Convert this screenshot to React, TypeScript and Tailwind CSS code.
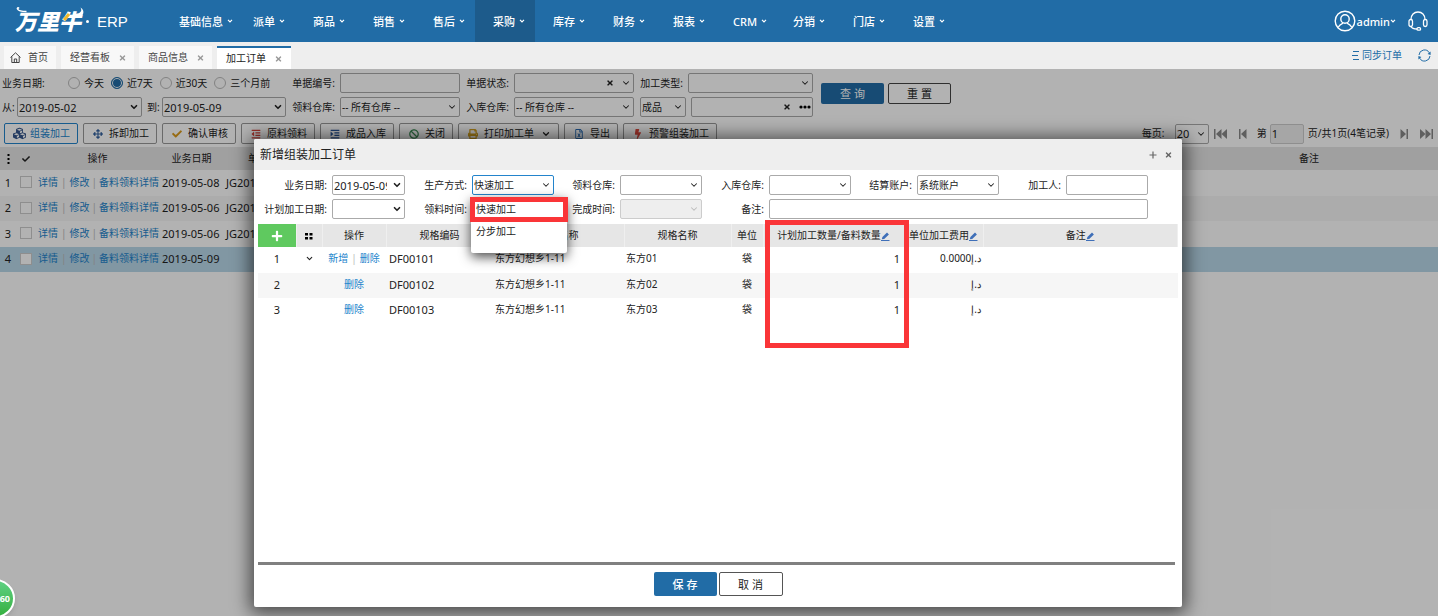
import type { ReactNode } from "react";
import { ChevronDown } from "lucide-react";
import {
  FaArrowsAlt,
  FaBan,
  FaBolt,
  FaCheck,
  FaCubes,
  FaIndent,
  FaOutdent,
  FaPlus,
  FaPrint,
  FaRegFileExcel,
  FaTimes,
} from "react-icons/fa";

const menus = ["派单", "商品", "销售", "售后", "采购", "库存", "财务", "报表", "CRM", "分销", "门店", "设置"];

const orders = [
  { id: 1, date: "2019-05-08", code: "JG201" },
  { id: 2, date: "2019-05-06", code: "JG201" },
  { id: 3, date: "2019-05-06", code: "JG201" },
  { id: 4, date: "2019-05-09", code: "" },
];

const items = [
  { id: 1, code: "DF00101", spec: "东方01", fee: "0.0000د.إ" },
  { id: 2, code: "DF00102", spec: "东方02", fee: "د.إ" },
  { id: 3, code: "DF00103", spec: "东方03", fee: "د.إ" },
];

const Logo = () => (
  <div className="relative flex items-center w-[145px] ml-[15px] h-full text-white">
    <span className="w-[69px] text-[22px] font-black italic leading-none whitespace-nowrap">万里牛</span>
    <svg className="absolute left-0 top-1 w-[72px] h-[34px]" viewBox="0 0 72 34" fill="none">
      <path d="M4 4.500c-1-1.500-2-.5-1.500.5 1 2 4 2.500 9 2.500" stroke="#fff" strokeWidth="1.500" />
      <path d="M54 10l-5 6" stroke="#f0b72c" strokeWidth="3" />
      <path d="M58 10c6 0 10-2 7.500-6.500 5 3 3.500 9.500-3.500 10.500z" fill="#fff" />
    </svg>
    <span className="ml-[2px] w-[3px] h-[3px] rounded-full bg-white" />
    <span className="ml-[8px] font-['Liberation_Sans',sans-serif] font-normal text-[15px]">ERP</span>
  </div>
);

const Caret = () => (
  <svg className="w-[6px] h-[4px]" viewBox="0 0 6 4" fill="none" stroke="currentColor" strokeWidth="1.2">
    <path d="M1 .8l2 2 2-2" />
  </svg>
);

const Header = () => (
  <header className="flex items-center h-[42px] bg-[#216ca6] text-white text-[11px] font-medium">
    <Logo />
    <nav className="flex h-full">
      <button className="flex items-center gap-1 w-[75px] pl-[19px]">
        基础信息
        <Caret />
      </button>
      {menus.map((m) => (
        <button
          key={m}
          className={`flex items-center gap-1 w-[60px] pl-[18px] ${m === "采购" ? "bg-[#1d5b8b]" : ""}`}
        >
          {m}
          <Caret />
        </button>
      ))}
    </nav>
    <button className="flex items-center ml-auto">
      <svg className="w-[22px] h-[22px] mr-px" viewBox="0 0 22 22" fill="none" stroke="currentColor" strokeWidth="1.4">
        <circle cx="11" cy="11" r="9.8" />
        <circle cx="11" cy="9" r="4.2" />
        <path d="M4 17.5c1.400-2.500 3-3.500 5-4.400M18 17.500c-1.400-2.500-3-3.500-5-4.400" />
      </svg>
      admin
      <Caret />
    </button>
    <button aria-label="客服" className="ml-[12px] mr-[10px]">
      <svg className="w-[20px] h-[20px]" viewBox="0 0 20 20" fill="none" stroke="currentColor" strokeWidth="1.3">
        <path d="M3 8.500C3 4 6 1 10 1s7 3 7 7.500" />
        <rect x="1" y="8.500" width="3.500" height="7" rx="1.700" />
        <rect x="15.500" y="8.500" width="3.500" height="7" rx="1.700" />
        <path d="M3 15.500c1 2 3 2.500 6 2.500" />
        <rect x="9" y="16.700" width="3.600" height="2.400" rx="1.200" />
      </svg>
    </button>
  </header>
);

const Tab = ({ label }: { label: string }) => (
  <button className="flex items-center gap-[9px] h-[23px] pl-[9px] w-[73px] bg-[#f8f8f8] text-[#444]">
    {label}
    <FaTimes className="w-[7px] h-[8px] text-[#999]" />
  </button>
);

const TabBar = () => (
  <div className="flex items-end h-[27px] pl-1 gap-[5px] bg-[#eee] text-[10px]">
    <button className="flex items-center h-[23px] pl-[6px] w-[52px] gap-[7px] bg-[#f8f8f8] text-[#444]">
      <svg className="w-[11px] h-[11px]" viewBox="0 0 11 11" fill="none" stroke="currentColor">
        <path d="M.5 5.500L5.500.8l5 4.700M1.800 4.500v6h7.400v-6M4.300 10.500V7h2.400v3.500" />
      </svg>
      首页
    </button>
    <Tab label="经营看板" />
    <Tab label="商品信息" />
    <button className="flex items-center gap-[9px] h-[23px] pl-[9px] w-[74px] bg-white border-t-2 border-[#216ca6] text-[#222]">
      加工订单
      <FaTimes className="w-[7px] h-[8px] text-[#999]" />
    </button>
    <div className="flex items-center self-center ml-auto pr-[7px] text-[#216ca6]">
      <button className="flex items-center gap-[3px]">
        <svg className="w-[7px] h-[9px]" viewBox="0 0 7 9" stroke="currentColor">
          <path d="M1 .5h6M0 4.500h6M1 8.500h6" />
        </svg>
        同步订单
      </button>
      <button aria-label="刷新" className="ml-[16px]">
        <svg className="w-[13px] h-[13px]" viewBox="0 0 13 13" fill="none" stroke="currentColor">
          <path d="M1 6a5.500 5.500 0 0 1 10.300-2.200M12 7a5.500 5.500 0 0 1-10.300 2.200" />
          <path d="M12.600 2.500v3.400l-3-1zM.4 10.500V7.100l3 1z" fill="currentColor" stroke="none" />
        </svg>
      </button>
    </div>
  </div>
);

type SelectProps = { id: string; value?: string; bold?: boolean; disabled?: boolean; className?: string; clear?: boolean };

const Select = ({ id, value = "", bold, disabled, className = "border-[#aaa]", clear }: SelectProps) => (
  <div className="relative w-full">
    <select
      id={id}
      disabled={disabled}
      className={`block appearance-none w-full h-[20px] pl-px pr-[17px] rounded-xs border bg-white disabled:bg-[#eee] disabled:opacity-100 ${className}`}
    >
      <option>{value}</option>
    </select>
    {clear && <FaTimes className="absolute right-[20px] top-[6px] w-[8px] h-[8px]" />}
    <ChevronDown
      className={`absolute right-[3px] top-[5px] w-[10px] h-[10px] pointer-events-none ${disabled ? "text-[#bbb]" : ""}`}
      strokeWidth={bold ? 4 : 2.5}
    />
  </div>
);

const Label = ({ id, children }: { id: string; children: ReactNode }) => (
  <label htmlFor={id} className="pr-[5px] text-right whitespace-nowrap">
    {children}:
  </label>
);

const Radio = ({ label, checked }: { label: string; checked?: boolean }) => (
  <label className="flex items-center gap-1 whitespace-nowrap">
    <input
      type="radio"
      name="range"
      defaultChecked={checked}
      className="appearance-none w-[12px] h-[12px] rounded-full border border-[#bbb] checked:border-[#216ca6] checked:bg-[#216ca6] checked:shadow-[inset_0_0_0_1px_white]"
    />
    {label}
  </label>
);

const Filters = () => (
  <div className="flex items-center pt-1">
    <div className="grid grid-cols-[286px_54px_120px_54px_120px_54px_125px] gap-y-1 items-center">
      <div className="flex items-center gap-[7px] pl-[2px]">
        <span className="w-[59px]">业务日期:</span>
        <Radio label="今天" />
        <Radio label="近7天" checked />
        <Radio label="近30天" />
        <Radio label="三个月前" />
      </div>
      <Label id="code">单据编号</Label>
      <input id="code" className="h-[20px] w-full px-1 border border-[#aaa] rounded-xs" />
      <Label id="status">单据状态</Label>
      <Select id="status" clear />
      <Label id="type">加工类型</Label>
      <Select id="type" />
      <div className="flex items-center pl-[2px]">
        <label htmlFor="from" className="w-[15px]">从:</label>
        <div className="w-[125px] text-[11px]">
          <Select id="from" value="2019-05-02" bold />
        </div>
        <label htmlFor="to" className="w-[20px] pl-[5px]">到:</label>
        <div className="w-[124px] text-[11px]">
          <Select id="to" value="2019-05-09" bold />
        </div>
      </div>
      <Label id="out">领料仓库</Label>
      <Select id="out" value="-- 所有仓库 --" />
      <Label id="in">入库仓库</Label>
      <Select id="in" value="-- 所有仓库 --" />
      <div className="col-span-2 flex gap-[5px] pl-[6px]">
        <div className="w-[46px]">
          <Select id="kind" value="成品" />
        </div>
        <div className="relative flex-1">
          <input aria-label="成品" className="block h-[20px] w-full px-1 border border-[#aaa] rounded-xs" />
          <FaTimes className="absolute right-[22px] top-[6px] w-[8px] h-[8px]" />
          <svg className="absolute right-[2px] top-[8px] w-[12px] h-[4px]" viewBox="0 0 12 4">
            <circle cx="2" cy="2" r="1.600" />
            <circle cx="6" cy="2" r="1.600" />
            <circle cx="10" cy="2" r="1.600" />
          </svg>
        </div>
      </div>
    </div>
    <button className="ml-2 w-[63px] h-[21px] -mt-1 rounded-xs bg-[#216ca6] text-white text-[11px]">查 询</button>
    <button className="ml-1 w-[63px] h-[21px] -mt-1 rounded-xs border border-[#444] bg-white text-[11px]">重 置</button>
  </div>
);

const ToolButton = ({ icon, children, active }: { icon: ReactNode; children: ReactNode; active?: boolean }) => (
  <button
    className={`flex items-center gap-1 h-[21px] px-[7px] rounded-xs border bg-white whitespace-nowrap ${
      active ? "border-[#2384cc] text-[#2384cc]" : "border-[#999]"
    }`}
  >
    <span className="flex justify-center w-[14px] text-[10px]">{icon}</span>
    {children}
  </button>
);

const PageArrow = ({ label, double, flip }: { label: string; double?: boolean; flip?: boolean }) => (
  <button aria-label={label} className={flip ? "-scale-x-100" : ""}>
    <svg className={double ? "w-[13px] h-[10px]" : "w-[8px] h-[10px]"} viewBox={double ? "0 0 13 10" : "0 0 8 10"} fill="#888">
      <path d="M0 0h1.500v10H0zM7.500 0v10L2 5z" />
      {double && <path d="M13 0v10L7.500 5z" />}
    </svg>
  </button>
);

const Toolbar = () => (
  <div className="flex items-center gap-[5px] mt-1.5 pl-1 pr-[5px]">
    <ToolButton icon={<FaCubes className="w-[13px] h-[13px] text-[#34558b]" />} active>组装加工</ToolButton>
    <ToolButton icon={<FaArrowsAlt className="text-[#34629f]" />}>拆卸加工</ToolButton>
    <ToolButton icon={<FaCheck className="text-[#d99a1c]" />}>确认审核</ToolButton>
    <ToolButton icon={<FaOutdent className="text-[#d9453c]" />}>原料领料</ToolButton>
    <ToolButton icon={<FaIndent className="text-[#2c5aa0]" />}>成品入库</ToolButton>
    <ToolButton icon={<FaBan className="text-[#3f9058]" />}>关闭</ToolButton>
    <ToolButton icon={<FaPrint className="text-[#d9a520]" />}>
      打印加工单
      <ChevronDown className="w-[10px] h-[10px] ml-[3px]" strokeWidth={3} />
    </ToolButton>
    <ToolButton icon={<FaRegFileExcel className="text-[#2c6fb8]" />}>导出</ToolButton>
    <ToolButton icon={<FaBolt className="text-[#e04a3f]" />}>预警组装加工</ToolButton>
    <div className="flex items-center ml-auto whitespace-nowrap">
      <label htmlFor="size" className="w-[33px]">每页:</label>
      <div className="w-[34px] mr-[5px] text-[11px]">
        <Select id="size" value="20" />
      </div>
      <PageArrow label="首页" double />
      <span className="w-3" />
      <PageArrow label="上一页" />
      <label htmlFor="page" className="ml-[10px] mr-[3px]">第</label>
      <input id="page" defaultValue="1" className="w-[34px] h-[20px] pl-px border border-[#ccc] bg-[#eee] rounded-xs text-[11px]" />
      <span className="ml-[4px] mr-[11px]">页/共1页(4笔记录)</span>
      <PageArrow label="下一页" flip />
      <span className="w-3" />
      <PageArrow label="末页" double flip />
    </div>
  </div>
);

const OrderTable = () => (
  <table className="table-fixed w-full mt-[3px]">
    <colgroup>
      <col className="w-[16px]" />
      <col className="w-[20px]" />
      <col className="w-[123px]" />
      <col className="w-[65px]" />
      <col className="w-[90px]" />
      <col />
      <col className="w-[258px]" />
    </colgroup>
    <thead>
      <tr className="h-[23px] bg-[#e6e6e6]">
        <th>
          <svg className="mx-auto w-[3px] h-[10px]" viewBox="0 0 3 10">
            <path d="M.5 0h2v2h-2zM.5 4h2v2h-2zM.5 8h2v2h-2z" />
          </svg>
        </th>
        <th><FaCheck className="mx-auto w-[8px] h-[8px]" /></th>
        <th className="font-normal">操作</th>
        <th className="font-normal">业务日期</th>
        <th className="pl-[24px] text-left font-normal">单</th>
        <th />
        <th className="font-normal">备注</th>
      </tr>
    </thead>
    <tbody className="text-[11px]">
      {orders.map((o) => (
        <tr
          key={o.id}
          className={`odd:h-[26px] even:h-[25px] *:pb-[2px] ${o.id === 4 ? "bg-[#b9d8ea]" : "even:bg-[#f7f7f7]"}`}
        >
          <td className="text-center">{o.id}</td>
          <td>
            <input
              type="checkbox"
              aria-label={`选择 ${o.id}`}
              className="block mx-auto appearance-none w-[12px] h-[12px] border border-[#ccc] bg-white"
            />
          </td>
          <td className="pl-[2px] text-[10px] text-[#2384cc] whitespace-nowrap">
            <a href="#">详情</a>
            <span className="mx-[3px] text-[#bbb]">|</span>
            <a href="#">修改</a>
            <span className="mx-[2px] text-[#bbb]">|</span>
            <a href="#">备料领料详情</a>
          </td>
          <td className="pl-[3px]">{o.date}</td>
          <td className="pl-[2px]">{o.code}</td>
          <td />
          <td />
        </tr>
      ))}
    </tbody>
  </table>
);

const TextField = ({ id, className = "" }: { id: string; className?: string }) => (
  <input id={id} className={`h-[20px] w-full px-1 border border-[#aaa] rounded-xs ${className}`} />
);

const OrderForm = () => (
  <form className="grid grid-cols-[78px_73px_67px_82px_66px_82px_67px_82px_66px_82px_67px_82px] gap-y-1 items-center pt-[5px]">
    <Label id="bizDate">业务日期</Label>
    <div className="text-[11px]">
      <Select id="bizDate" value="2019-05-09" bold />
    </div>
    <Label id="mode">生产方式</Label>
    <div className="relative">
      <Select id="mode" value="快速加工" className="border-[#2384cc]" />
      <div className="absolute left-[-1px] top-[22px] z-10 w-[96px] h-[56px] bg-white rounded-xs shadow-[0_4px_12px_rgba(0,0,0,0.7)]">
        <button type="button" className="block w-[98px] -ml-px h-[25px] border-[5px] border-[#fa3538] pl-px text-left">
          快速加工
        </button>
        <button type="button" className="block w-full h-[18px] pl-[5px] text-left">
          分步加工
        </button>
      </div>
    </div>
    <Label id="outStore">领料仓库</Label>
    <Select id="outStore" />
    <Label id="inStore">入库仓库</Label>
    <Select id="inStore" />
    <Label id="account">结算账户</Label>
    <Select id="account" value="系统账户" />
    <Label id="worker">加工人</Label>
    <TextField id="worker" />
    <Label id="planDate">计划加工日期</Label>
    <Select id="planDate" bold />
    <Label id="pickTime">领料时间</Label>
    <Select id="pickTime" />
    <Label id="doneTime">完成时间</Label>
    <Select id="doneTime" disabled className="border-[#ccc]" />
    <Label id="remark">备注</Label>
    <TextField id="remark" className="col-span-5" />
  </form>
);

const Pencil = () => (
  <svg className="inline-block w-[9px] h-[9px]" viewBox="0 0 9 9" fill="#3f6fb8">
    <path d="M.8 7.300l.6-2.300L6 .6l1.900 1.800L3.200 7zM0 8h8.500v1H0z" />
  </svg>
);

const ItemTable = () => (
  <div className="relative mx-1 mt-[5px]">
    <table className="table-fixed w-full">
      <colgroup>
        <col className="w-[38px]" />
        <col className="w-[26px]" />
        <col className="w-[64px]" />
        <col className="w-[107px]" />
        <col className="w-[131px]" />
        <col className="w-[107px]" />
        <col className="w-[32px]" />
        <col className="w-[141px]" />
        <col className="w-[79px]" />
        <col />
      </colgroup>
      <thead>
        <tr className="h-[23px] bg-[#e6e6e6] *:font-normal *:whitespace-nowrap *:border-r *:border-[#efefef]">
          <th className="bg-[#5fc95f]">
            <button aria-label="添加" className="block mx-auto text-white text-[12px]">
              <FaPlus />
            </button>
          </th>
          <th>
            <svg className="mx-auto w-[8px] h-[8px]" viewBox="0 0 8 8">
              <path d="M0 1h3v2.500H0zM4.500 1h3v2.500h-3zM0 5h3v2.500H0zM4.500 5h3v2.500h-3z" />
            </svg>
          </th>
          <th>操作</th>
          <th>规格编码</th>
          <th>商品名称</th>
          <th>规格名称</th>
          <th>单位</th>
          <th>计划加工数量/备料数量<Pencil /></th>
          <th>单位加工费用<Pencil /></th>
          <th>备注<Pencil /></th>
        </tr>
      </thead>
      <tbody>
        {items.map((item) => (
          <tr key={item.id} className="odd:h-[26px] even:h-[25px] *:pb-[3px] even:bg-[#f6f6f6]">
            <td className="text-center text-[11px]">{item.id}</td>
            <td>{item.id === 1 && <ChevronDown className="mx-auto w-[9px] h-[9px]" strokeWidth={3} />}</td>
            <td className="text-center text-[#2384cc] whitespace-nowrap">
              {item.id === 1 && (
                <>
                  <a href="#">新增</a>
                  <span className="mx-[3px] text-[#bbb]">|</span>
                </>
              )}
              <a href="#">删除</a>
            </td>
            <td className="pl-[3px] text-[11px]">{item.code}</td>
            <td className="pl-[2px]">东方幻想乡1-11</td>
            <td className="pl-[2px]">{item.spec}</td>
            <td className="text-center">袋</td>
            <td className="pr-[4px] text-right text-[11px]">1</td>
            <td className="pr-[2px] text-right">{item.fee}</td>
            <td />
          </tr>
        ))}
      </tbody>
    </table>
    <div className="absolute left-[507px] -top-1 w-[144px] h-[128px] border-[5px] border-[#fa3538] pointer-events-none" />
  </div>
);

const OrderDialog = () => (
  <section
    role="dialog"
    aria-label="新增组装加工订单"
    className="flex flex-col flex-1 min-w-0 bg-white rounded-xs shadow-[0_2px_18px_4px_rgba(0,0,0,0.6)]"
  >
    <div className="flex items-center h-[31px] pl-[6px] pr-[10px] bg-[#eee] rounded-t-xs">
      <h2 className="text-[12px]">新增组装加工订单</h2>
      <button aria-label="最大化" className="ml-auto">
        <svg className="w-[8px] h-[8px]" viewBox="0 0 8 8" stroke="#666" strokeWidth="1.200">
          <path d="M4 .5v7M.5 4h7" />
        </svg>
      </button>
      <button aria-label="关闭" className="ml-2">
        <FaTimes className="w-[7px] h-[8px] text-[#666]" />
      </button>
    </div>
    <OrderForm />
    <ItemTable />
    <div className="flex justify-center gap-[2px] mt-auto ml-1 mr-[7px] pl-[3px] pt-[7px] pb-[11px] border-t-3 border-[#808080] text-[11px]">
      <button className="w-[63px] h-[24px] rounded-xs bg-[#216ca6] text-white font-medium">保 存</button>
      <button className="w-[64px] h-[24px] rounded-xs border border-[#555] bg-white">取 消</button>
    </div>
  </section>
);

const App = () => {
  return (
    <div className="relative flex flex-col min-h-screen overflow-hidden bg-white text-[#222] text-[10px] leading-[15px] font-['Noto_Sans','Noto_Sans_CJK_SC',sans-serif]">
      <Header />
      <TabBar />
      <main className="relative flex flex-col flex-1">
        <Filters />
        <Toolbar />
        <OrderTable />
        <div className="absolute inset-0 flex pt-[70px] pb-[9px] pl-[254px] pr-64 bg-black/30 overflow-hidden">
          <OrderDialog />
        </div>
      </main>
      <div className="absolute -left-[24px] -bottom-[2px] flex items-center justify-end w-[39px] h-[39px] pr-[3px] rounded-full border-2 border-white bg-linear-to-b from-[#5fd183] to-[#35b03e] text-white text-[9px] font-bold shadow-md">
        60
      </div>
    </div>
  );
};

export default App;
